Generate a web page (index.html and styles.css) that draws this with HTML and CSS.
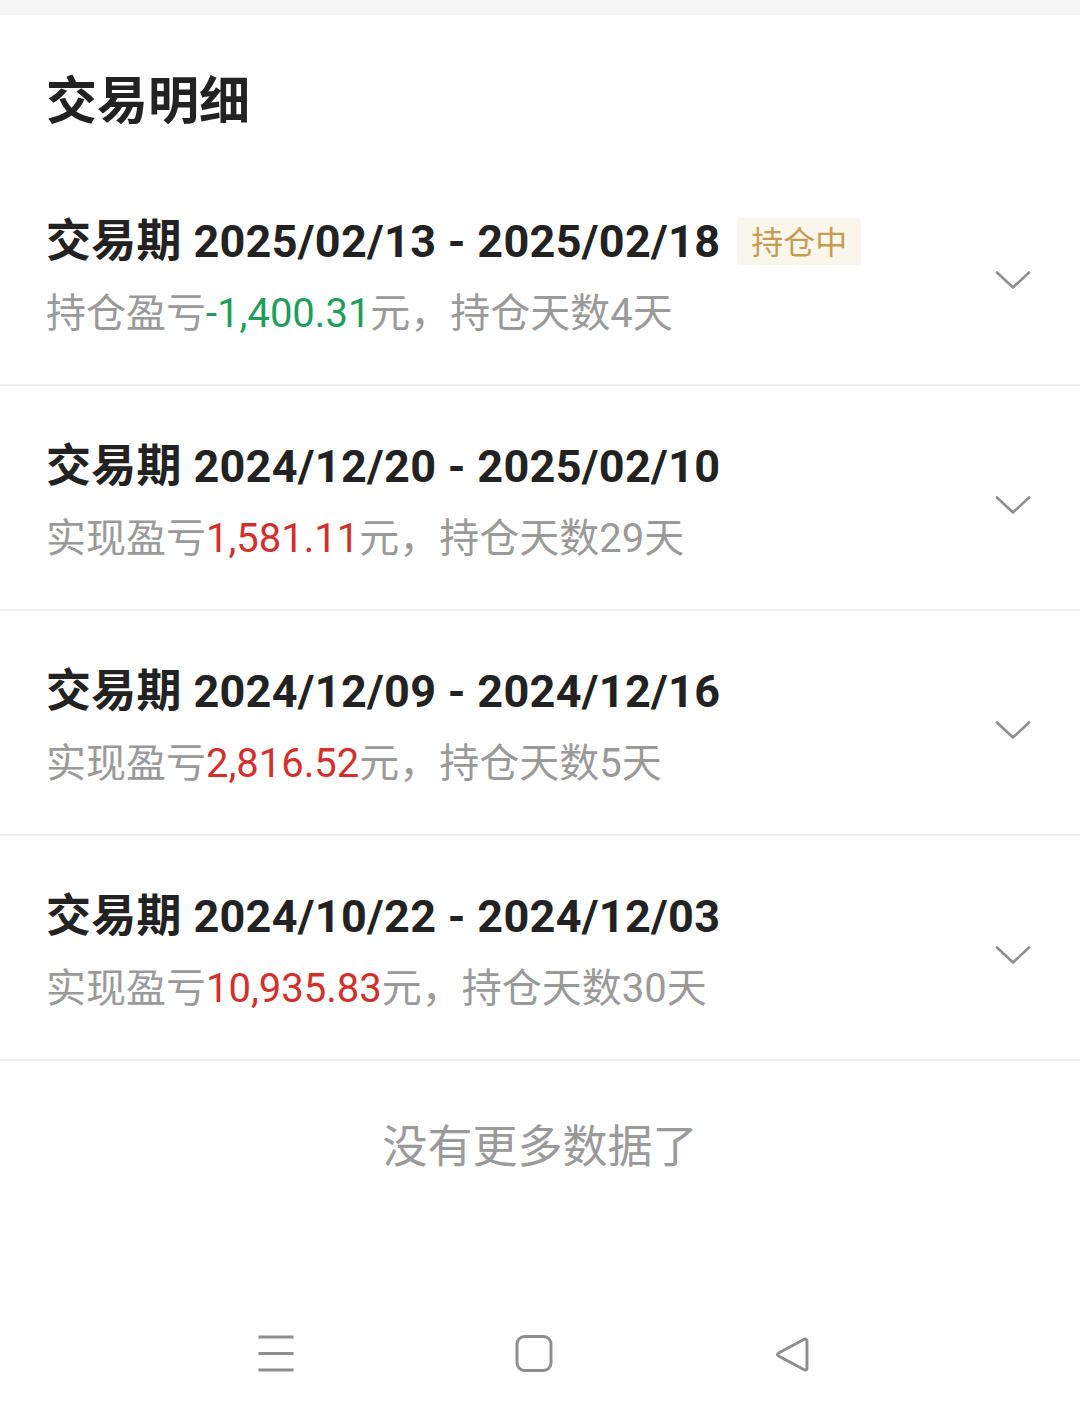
FILE: index.html
```html
<!DOCTYPE html>
<html lang="zh-CN">
<head>
<meta charset="utf-8">
<title>交易明细</title>
<link rel="stylesheet" href="styles.css">
</head>
<body>
<div class="topband"></div>
<header class="header">交易明细</header>
<main class="list">
  <section class="row">
    <div class="info">
      <div class="title">交易期 2025/02/13 - 2025/02/18<span class="badge">持仓中</span></div>
      <div class="sub">持仓盈亏<span class="down">-1,400.31</span>元，持仓天数4天</div>
    </div>
    <svg class="chev" width="36" height="20" viewBox="0 0 36 20"><path d="M2 2.5 L18 17.5 L34 2.5" fill="none" stroke="#8f8f8f" stroke-width="2.6" stroke-linecap="round" stroke-linejoin="round"/></svg>
  </section>
  <section class="row">
    <div class="info">
      <div class="title">交易期 2024/12/20 - 2025/02/10</div>
      <div class="sub">实现盈亏<span class="up">1,581.11</span>元，持仓天数29天</div>
    </div>
    <svg class="chev" width="36" height="20" viewBox="0 0 36 20"><path d="M2 2.5 L18 17.5 L34 2.5" fill="none" stroke="#8f8f8f" stroke-width="2.6" stroke-linecap="round" stroke-linejoin="round"/></svg>
  </section>
  <section class="row">
    <div class="info">
      <div class="title">交易期 2024/12/09 - 2024/12/16</div>
      <div class="sub">实现盈亏<span class="up">2,816.52</span>元，持仓天数5天</div>
    </div>
    <svg class="chev" width="36" height="20" viewBox="0 0 36 20"><path d="M2 2.5 L18 17.5 L34 2.5" fill="none" stroke="#8f8f8f" stroke-width="2.6" stroke-linecap="round" stroke-linejoin="round"/></svg>
  </section>
  <section class="row">
    <div class="info">
      <div class="title">交易期 2024/10/22 - 2024/12/03</div>
      <div class="sub">实现盈亏<span class="up">10,935.83</span>元，持仓天数30天</div>
    </div>
    <svg class="chev" width="36" height="20" viewBox="0 0 36 20"><path d="M2 2.5 L18 17.5 L34 2.5" fill="none" stroke="#8f8f8f" stroke-width="2.6" stroke-linecap="round" stroke-linejoin="round"/></svg>
  </section>
</main>
<div class="nomore">没有更多数据了</div>
<nav class="navbar">
  <div class="navslot">
    <svg width="40" height="40" viewBox="0 0 40 40"><path d="M2.5 3 H37.5 M2.5 19.5 H37.5 M2.5 36 H37.5" stroke="#8e8e8e" stroke-width="3" fill="none"/></svg>
  </div>
  <div class="navslot">
    <svg width="40" height="40" viewBox="0 0 40 40"><rect x="3" y="2.5" width="34" height="34" rx="7.5" fill="none" stroke="#8e8e8e" stroke-width="3"/></svg>
  </div>
  <div class="navslot">
    <svg width="40" height="40" viewBox="0 0 40 40"><path d="M35 7.5 Q35 3.8 31.8 5.5 L7 18.8 Q4 20.5 7 22.2 L31.8 35.5 Q35 37.2 35 33.5 Z" fill="none" stroke="#8e8e8e" stroke-width="3" stroke-linejoin="round"/></svg>
  </div>
</nav>
</body>
</html>
```
FILE: styles.css
```css
html, body {
  margin: 0;
  padding: 0;
  background: #ffffff;
}
body {
  width: 1080px;
  font-family: Roboto, "Noto Sans CJK SC", sans-serif;
  color: #222222;
}
.topband {
  height: 15px;
  background: #f6f6f6;
}
.header {
  font-family: "Noto Sans CJK SC", sans-serif;
  font-size: 51px;
  font-weight: 700;
  line-height: 60px;
  padding: 52px 46px 34px;
  color: #222222;
}
.row {
  display: flex;
  align-items: center;
  padding: 51px 49px 42px 46px;
  border-bottom: 2px solid #efefef;
}
.info {
  flex: 1;
}
.title {
  font-size: 45px;
  font-weight: 700;
  line-height: 60px;
  letter-spacing: 0.3px;
  white-space: nowrap;
  color: #222222;
}
.badge {
  display: inline-block;
  vertical-align: top;
  margin-top: 6px;
  margin-left: 17px;
  height: 47px;
  padding: 0 14px;
  line-height: 44px;
  letter-spacing: 0;
  font-family: "Noto Sans CJK SC", sans-serif;
  font-size: 32px;
  font-weight: 400;
  color: #c59c53;
  background: #faf6ec;
  border-radius: 3px;
}
.sub {
  margin-top: 14px;
  font-size: 40px;
  line-height: 56px;
  color: #9a9a9a;
  white-space: nowrap;
}
.down {
  color: #1f9d5c;
}
.up {
  color: #d2302d;
}
.chev {
  flex: none;
  margin-top: 5px;
}
.nomore {
  font-family: "Noto Sans CJK SC", sans-serif;
  font-size: 45px;
  line-height: 60px;
  color: #9a9a9a;
  text-align: center;
  padding-top: 53px;
}
.navbar {
  display: flex;
  justify-content: center;
  padding-right: 13px;
  margin-top: 160px;
}
.navslot {
  width: 258px;
  height: 40px;
  display: flex;
  justify-content: center;
}
```
